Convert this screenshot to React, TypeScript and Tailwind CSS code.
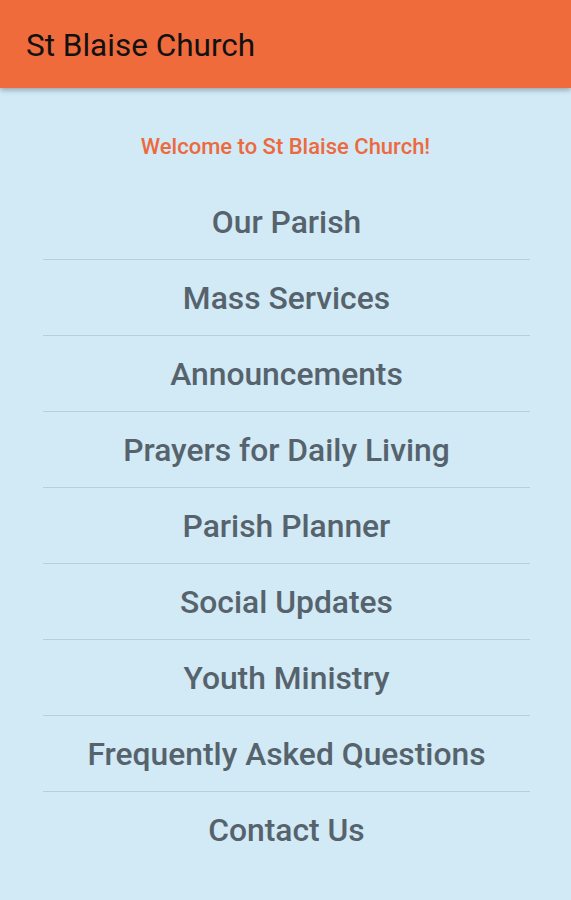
const items = [
  "Our Parish",
  "Mass Services",
  "Announcements",
  "Prayers for Daily Living",
  "Parish Planner",
  "Social Updates",
  "Youth Ministry",
  "Frequently Asked Questions",
  "Contact Us",
];

export default function App() {
  return (
    <div className="flex min-h-[900px] w-full flex-col bg-[#d2e9f6] font-['Roboto',sans-serif]">
      <header className="relative z-10 flex h-[88px] items-center bg-[#f06b3c] px-[26px] pt-[4px] shadow-[0_2px_5px_rgba(0,0,0,0.3)]">
        <h1 className="text-[31.5px] leading-none text-[#111]">St Blaise Church</h1>
      </header>

      <p className="pt-[46px] pb-[24px] text-center text-[22px] font-medium leading-[26px] text-[#ec6a3e]">
        Welcome to St Blaise Church!
      </p>

      <ul className="ml-[43px] mr-[41px] flex flex-col">
        {items.map((item, i) => (
          <li
            key={item}
            className={
              i < items.length - 1
                ? "flex h-[76px] items-center justify-center border-b border-[#b7cfdd] pt-[2px] text-[31.8px] font-medium text-[#56636c]"
                : "flex h-[76px] items-center justify-center pt-[2px] text-[31.8px] font-medium text-[#56636c]"
            }
          >
            {item}
          </li>
        ))}
      </ul>
    </div>
  );
}
